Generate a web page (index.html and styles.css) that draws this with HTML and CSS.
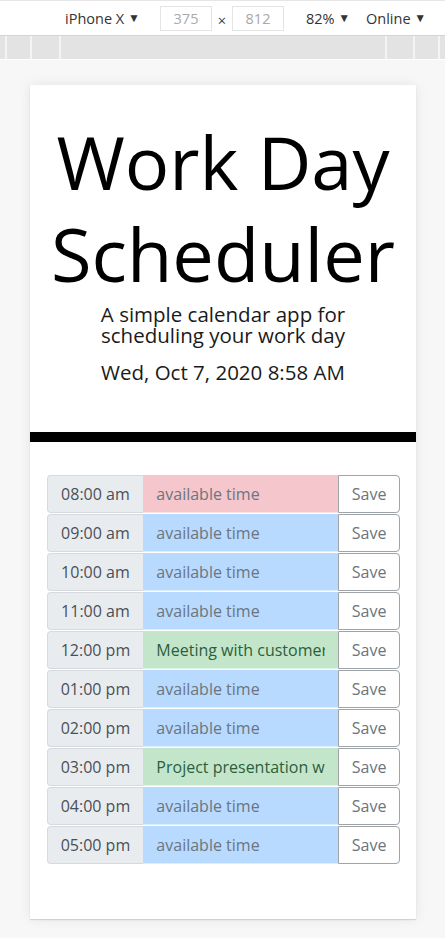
FILE: index.html
```html
<!DOCTYPE html>
<html lang="en">
<head>
<meta charset="utf-8">
<title>Work Day Scheduler</title>
<link rel="stylesheet" href="styles.css">
</head>
<body>
<div class="devbar">
  <div class="toolbar">
    <span class="tb-device">iPhone X <span class="caret">▼</span></span>
    <span class="tb-box">375</span>
    <span class="tb-times">×</span>
    <span class="tb-box">812</span>
    <span class="tb-zoom">82% <span class="caret">▼</span></span>
    <span class="tb-online">Online <span class="caret">▼</span></span>
  </div>
  <div class="ruler">
    <div class="seg s1"></div>
    <div class="seg s2"></div>
    <div class="seg s3"></div>
    <div class="seg s4"></div>
    <div class="seg s5"></div>
    <div class="seg s6"></div>
    <div class="seg s7"></div>
  </div>
</div>
<div class="stage">
  <div class="device">
    <header class="jumbo">
      <h1 class="title">Work Day Scheduler</h1>
      <p class="lead">A simple calendar app for<br>scheduling your work day</p>
      <p class="date">Wed, Oct 7, 2020 8:58 AM</p>
    </header>
    <main class="rows">
      <div class="row"><div class="hour">08:00 am</div><div class="slot past"><span class="ph">available time</span></div><div class="save">Save</div></div>
      <div class="row"><div class="hour">09:00 am</div><div class="slot future"><span class="ph">available time</span></div><div class="save">Save</div></div>
      <div class="row"><div class="hour">10:00 am</div><div class="slot future"><span class="ph">available time</span></div><div class="save">Save</div></div>
      <div class="row"><div class="hour">11:00 am</div><div class="slot future"><span class="ph">available time</span></div><div class="save">Save</div></div>
      <div class="row"><div class="hour">12:00 pm</div><div class="slot booked"><span class="txt">Meeting with customer</span></div><div class="save">Save</div></div>
      <div class="row"><div class="hour">01:00 pm</div><div class="slot future"><span class="ph">available time</span></div><div class="save">Save</div></div>
      <div class="row"><div class="hour">02:00 pm</div><div class="slot future"><span class="ph">available time</span></div><div class="save">Save</div></div>
      <div class="row"><div class="hour">03:00 pm</div><div class="slot booked"><span class="txt">Project presentation with team</span></div><div class="save">Save</div></div>
      <div class="row"><div class="hour">04:00 pm</div><div class="slot future"><span class="ph">available time</span></div><div class="save">Save</div></div>
      <div class="row"><div class="hour">05:00 pm</div><div class="slot future"><span class="ph">available time</span></div><div class="save">Save</div></div>
    </main>
  </div>
</div>
</body>
</html>
```

FILE: styles.css
```css
html, body {
  margin: 0;
  padding: 0;
}
body {
  width: 445px;
  height: 938px;
  overflow: hidden;
  background: #f7f7f7;
  font-family: "Open Sans", "Noto Sans", sans-serif;
}
.devbar {
  background: #ffffff;
  padding-bottom: 1px;
}
.toolbar {
  height: 34px;
  border-top: 1px solid #e6e6e6;
  border-bottom: 1px solid #d4d4d4;
  display: flex;
  align-items: center;
  padding-left: 65px;
  font-size: 14.5px;
  color: #333333;
}
.caret {
  font-size: 12px;
  position: relative;
  top: -2px;
}
.tb-device { width: 95px; }
.tb-box {
  box-sizing: border-box;
  width: 52px;
  height: 25px;
  border: 1px solid #e4e4e4;
  color: #a9a9a9;
  display: flex;
  align-items: center;
  justify-content: center;
}
.tb-times {
  width: 20px;
  text-align: center;
  color: #444;
  padding-top: 4px;
}
.tb-zoom { margin-left: 22px; width: 60px; }
.ruler {
  height: 23px;
  display: flex;
  background: #e3e3e3;
}
.seg {
  height: 100%;
  border-right: 2px solid #f4f4f4;
  box-sizing: border-box;
}
.s1 { width: 7px; }
.s2 { width: 25px; }
.s3 { width: 29px; }
.s4 { width: 326px; }
.s5 { width: 28px; }
.s6 { width: 25px; }
.s7 { flex: 1; border-right: none; }
.stage {
  padding: 25px 0 0 30px;
}
.device {
  width: 386px;
  height: 834px;
  background: #ffffff;
  box-shadow: 0 0 12px rgba(0, 0, 0, 0.08), 0 1px 1px rgba(0, 0, 0, 0.12);
}
.jumbo {
  text-align: center;
  padding-top: 31px;
  padding-bottom: 46px;
  border-bottom: 10px solid #000000;
  color: #000;
}
.title {
  margin: 0 0 3.5px 0;
  font-weight: 400;
  font-size: 74px;
  line-height: 92px;
}
.lead {
  margin: 0 0 12.5px 0;
  font-size: 20.5px;
  line-height: 21px;
  color: #1a1a1a;
}
.date {
  margin: 0;
  font-size: 20.5px;
  line-height: 28px;
  color: #1a1a1a;
}
.rows {
  padding: 33px 16px 0 16.5px;
  display: flex;
  flex-direction: column;
  gap: 1px;
}
.row {
  display: flex;
  height: 38px;
  font-size: 16px;
}
.hour {
  box-sizing: border-box;
  width: 97px;
  background: #e9ecef;
  border: 1px solid #d6dade;
  border-right: none;
  border-radius: 4px 0 0 4px;
  color: #495057;
  display: flex;
  align-items: center;
  justify-content: center;
}
.slot {
  box-sizing: border-box;
  width: 195px;
  padding: 0 13px 0 13px;
  display: flex;
  align-items: center;
  overflow: hidden;
  border-bottom: 1px solid rgba(255,255,255,0.5);
}
.slot span {
  display: block;
  overflow: hidden;
  white-space: nowrap;
  width: 100%;
}
.past { background: #f5c6cb; }
.future { background: #b8daff; }
.booked { background: #c3e6cb; }
.ph { color: #6b7580; }
.txt { color: #2c5e3b; }
.save {
  box-sizing: border-box;
  width: 62px;
  background: #ffffff;
  border: 1px solid #9fa4a8;
  border-radius: 0 4px 4px 0;
  color: #6c757d;
  display: flex;
  align-items: center;
  justify-content: center;
}
```
